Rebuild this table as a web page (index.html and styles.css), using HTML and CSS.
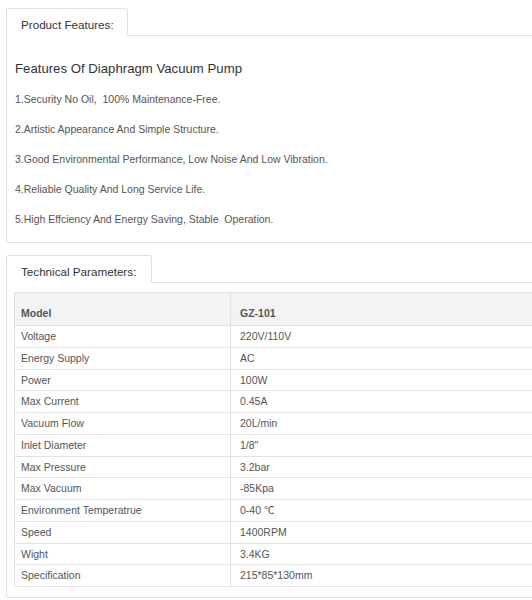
FILE: index.html
```html
<!DOCTYPE html>
<html lang="en">
<head>
<meta charset="utf-8">
<title>Diaphragm Vacuum Pump</title>
<link rel="stylesheet" href="styles.css">
</head>
<body>
<div class="page">
  <section class="panel">
    <div class="tabbar"><div class="tab tab-features">Product Features:</div></div>
    <div class="panel-body features">
      <h2 class="title">Features Of Diaphragm Vacuum Pump</h2>
      <p class="item">1.Security No Oil,&nbsp; 100% Maintenance-Free.</p>
      <p class="item">2.Artistic Appearance And Simple Structure.</p>
      <p class="item">3.Good Environmental Performance, Low Noise And Low Vibration.</p>
      <p class="item">4.Reliable Quality And Long Service Life.</p>
      <p class="item">5.High Effciency And Energy Saving, Stable&nbsp; Operation.</p>
    </div>
  </section>
  <section class="panel panel-params">
    <div class="tabbar"><div class="tab tab-params">Technical Parameters:</div></div>
    <div class="panel-body params">
      <table class="spec">
        <thead>
          <tr><th class="c1">Model</th><th class="c2">GZ-101</th></tr>
        </thead>
        <tbody>
          <tr><td class="c1">Voltage</td><td class="c2">220V/110V</td></tr>
          <tr><td class="c1">Energy Supply</td><td class="c2">AC</td></tr>
          <tr><td class="c1">Power</td><td class="c2">100W</td></tr>
          <tr><td class="c1">Max Current</td><td class="c2">0.45A</td></tr>
          <tr><td class="c1">Vacuum Flow</td><td class="c2">20L/min</td></tr>
          <tr><td class="c1">Inlet Diameter</td><td class="c2">1/8"</td></tr>
          <tr><td class="c1">Max Pressure</td><td class="c2">3.2bar</td></tr>
          <tr><td class="c1">Max Vacuum</td><td class="c2">-85Kpa</td></tr>
          <tr><td class="c1">Environment Temperatrue</td><td class="c2">0-40 ℃</td></tr>
          <tr><td class="c1">Speed</td><td class="c2">1400RPM</td></tr>
          <tr><td class="c1">Wight</td><td class="c2">3.4KG</td></tr>
          <tr><td class="c1">Specification</td><td class="c2">215*85*130mm</td></tr>
        </tbody>
      </table>
    </div>
  </section>
</div>
</body>
</html>
```
FILE: styles.css
```css
html, body {
  margin: 0;
  padding: 0;
  background: #fff;
  overflow: hidden;
}
body {
  font-family: "Liberation Sans", Arial, "Noto Sans CJK SC", sans-serif;
  color: #555;
}
.page {
  width: 620px;
  padding: 8px 0 0 6px;
}
.panel {
  width: 600px;
}
.panel-params {
  margin-top: 12px;
}
.tabbar {
  display: flex;
  border-bottom: 1px solid #e0e0e0;
}
.tab {
  box-sizing: border-box;
  height: 28px;
  margin-bottom: -1px;
  padding: 7px 0 0 14px;
  border: 1px solid #e0e0e0;
  border-bottom-color: #fff;
  border-radius: 3px 3px 0 0;
  background: #fff;
  font-size: 11.66px;
  line-height: 17px;
  color: #333;
}
.tab-features { width: 122px; }
.tab-params { width: 146px; }
.panel-body {
  border: 1px solid #e0e0e0;
  border-top: none;
  border-radius: 0 0 3px 3px;
}
.features {
  padding: 23px 8px 8px 8px;
}
.title {
  margin: 0 0 5px;
  font-size: 13.2px;
  line-height: 20px;
  font-weight: normal;
  color: #333;
}
.item {
  margin: 0;
  font-size: 10.5px;
  line-height: 30px;
  color: #555;
  white-space: pre;
}
.params {
  padding: 9px 0 10px 7px;
}
.spec {
  border-collapse: collapse;
  width: 560px;
  border: 1px solid #e2e2e2;
  font-size: 10.5px;
  color: #555;
}
.spec th, .spec td {
  border: 1px solid #e2e2e2;
  text-align: left;
  vertical-align: middle;
}
.spec th {
  background: #f3f3f3;
  font-weight: bold;
  padding: 12px 0 4px 6px;
  line-height: 16px;
}
.spec td {
  padding: 3px 0 3px 6px;
  line-height: 14.75px;
}
.spec .c1 { width: 209px; }
.spec .c2 { padding-left: 9px; }
```
